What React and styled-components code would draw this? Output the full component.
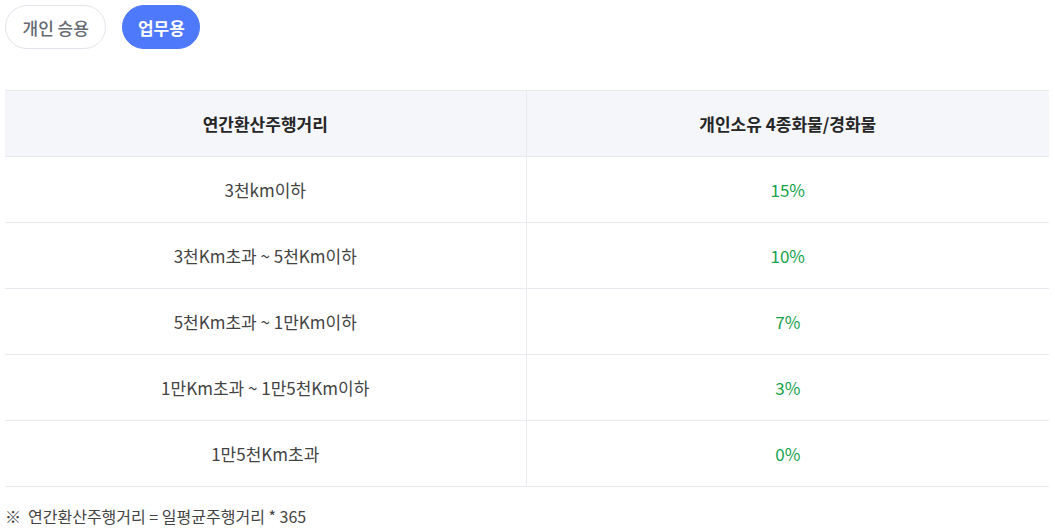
import React, { useState } from "react";
import styled, { createGlobalStyle } from "styled-components";

const Global = createGlobalStyle`
  * { box-sizing: border-box; }
  body {
    margin: 0;
    background: #fff;
    font-family: "Noto Sans CJK KR", "Noto Sans", sans-serif;
  }
`;

const Page = styled.div`
  padding: 5px 5px 0 5px;
`;

const Tabs = styled.div`
  display: flex;
  gap: 16px;
  align-items: center;
`;

const Tab = styled.button`
  height: 44px;
  padding: 0 ${(p) => (p.$active ? "14.5px" : "16.5px")};
  border-radius: 22px;
  border: 1px solid ${(p) => (p.$active ? "#4e79fb" : "#e1e4ea")};
  background: ${(p) => (p.$active ? "#4e79fb" : "#fff")};
  color: ${(p) => (p.$active ? "#fff" : "#666a73")};
  font-family: inherit;
  font-size: 17px;
  font-weight: ${(p) => (p.$active ? 700 : 500)};
  cursor: pointer;
  line-height: 1;
`;

const Table = styled.table`
  margin-top: 41px;
  width: 1044px;
  border-collapse: collapse;
  table-layout: fixed;
`;

const Th = styled.th`
  height: 66px;
  background: #f5f6fa;
  border-top: 1px solid #e9eaf0;
  border-bottom: 1px solid #e9eaf0;
  font-size: 17px;
  font-weight: 700;
  color: #262626;
  text-align: center;
  padding: 0;
  & + & { border-left: 1px solid #e9eaf0; }
`;

const Td = styled.td`
  height: 66px;
  border-bottom: 1px solid #e9eaf0;
  font-size: 17px;
  color: ${(p) => (p.$rate ? "#16a34a" : "#444")};
  text-align: center;
  padding: 0;
  & + & { border-left: 1px solid #e9eaf0; }
`;

const Note = styled.p`
  margin: 17px 0 0 0;
  font-size: 16px;
  line-height: 24px;
  color: #444;
`;

const Mark = styled.span`
  margin-right: 7px;
`;

const rows = [
  ["3천km이하", "15%"],
  ["3천Km초과 ~ 5천Km이하", "10%"],
  ["5천Km초과 ~ 1만Km이하", "7%"],
  ["1만Km초과 ~ 1만5천Km이하", "3%"],
  ["1만5천Km초과", "0%"],
];

export default function App() {
  const [tab, setTab] = useState(1);
  return (
    <Page>
      <Global />
      <Tabs>
        <Tab $active={tab === 0} onClick={() => setTab(0)}>개인 승용</Tab>
        <Tab $active={tab === 1} onClick={() => setTab(1)}>업무용</Tab>
      </Tabs>
      <Table>
        <colgroup>
          <col style={{ width: "521px" }} />
          <col />
        </colgroup>
        <thead>
          <tr>
            <Th>연간환산주행거리</Th>
            <Th>개인소유 4종화물/경화물</Th>
          </tr>
        </thead>
        <tbody>
          {rows.map(([d, r]) => (
            <tr key={d}>
              <Td>{d}</Td>
              <Td $rate>{r}</Td>
            </tr>
          ))}
        </tbody>
      </Table>
      <Note><Mark>※</Mark>연간환산주행거리 = 일평균주행거리 * 365</Note>
    </Page>
  );
}
